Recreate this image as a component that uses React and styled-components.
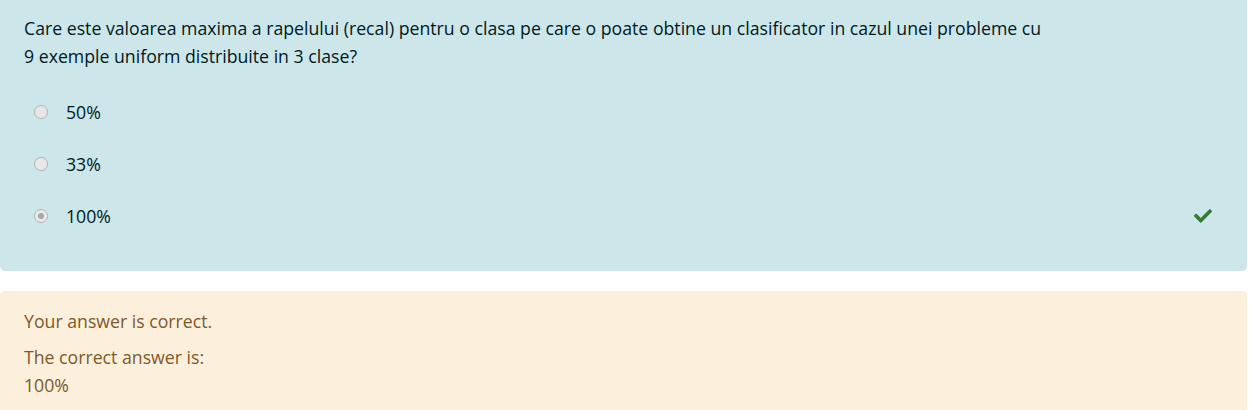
import React from "react";
import styled, { createGlobalStyle } from "styled-components";
import { FaCheck } from "react-icons/fa";

const GlobalStyle = createGlobalStyle`
  html, body {
    margin: 0;
    padding: 0;
    background: #fff;
  }
  body {
    font-family: "Open Sans", "Noto Sans", sans-serif;
    font-size: 17.7px;
    line-height: 28px;
  }
`;

const Page = styled.div`
  display: flex;
  flex-direction: column;
  gap: 20px;
  padding-right: 6px;
`;

const Formulation = styled.div`
  background: #cce6ea;
  color: #001a1e;
  border-radius: 0 0 5px 5px;
  padding: 14px 24px 41px 24px;
`;

const QText = styled.div`
  margin-bottom: 28px;
`;

const Answers = styled.div`
  display: flex;
  flex-direction: column;
  gap: 24px;
`;

const Row = styled.div`
  display: flex;
  align-items: center;
  padding-left: 10px;
`;

const Radio = styled.span`
  width: 14px;
  height: 14px;
  box-sizing: border-box;
  border-radius: 50%;
  border: 1px solid #b3b3b3;
  background: #e8e8e8;
  display: flex;
  align-items: center;
  justify-content: center;
  margin-right: 18px;
  flex-shrink: 0;

  &::after {
    content: "";
    width: 6px;
    height: 6px;
    border-radius: 50%;
    background: ${(p) => (p.checked ? "#a6a6a6" : "transparent")};
  }
`;

const Label = styled.span`
  flex: 1;
`;

const Mark = styled.span`
  color: #357a32;
  display: flex;
  margin-right: 11px;
`;

const Outcome = styled.div`
  background: #fcefdc;
  color: #7d5a29;
  border-radius: 5px 5px 0 0;
  padding: 16px 24px 16px 24px;
  min-height: 87px;
`;

const Para = styled.p`
  margin: 0 0 8px 0;
`;

const answers = [
  { text: "50%", checked: false },
  { text: "33%", checked: false },
  { text: "100%", checked: true, correct: true },
];

function App() {
  return (
    <>
      <GlobalStyle />
      <Page>
        <Formulation>
          <QText>
            Care este valoarea maxima a rapelului (recal) pentru o clasa pe care
            o poate obtine un clasificator in cazul unei probleme cu
            <br />9 exemple uniform distribuite in 3 clase?
          </QText>
          <Answers>
            {answers.map((a, k) => (
              <Row key={k}>
                <Radio checked={a.checked} />
                <Label>{a.text}</Label>
                {a.correct ? (
                  <Mark>
                    <FaCheck size={18} />
                  </Mark>
                ) : null}
              </Row>
            ))}
          </Answers>
        </Formulation>
        <Outcome>
          <Para>Your answer is correct.</Para>
          <div>
            The correct answer is:
            <br />
            100%
          </div>
        </Outcome>
      </Page>
    </>
  );
}

export default App;
